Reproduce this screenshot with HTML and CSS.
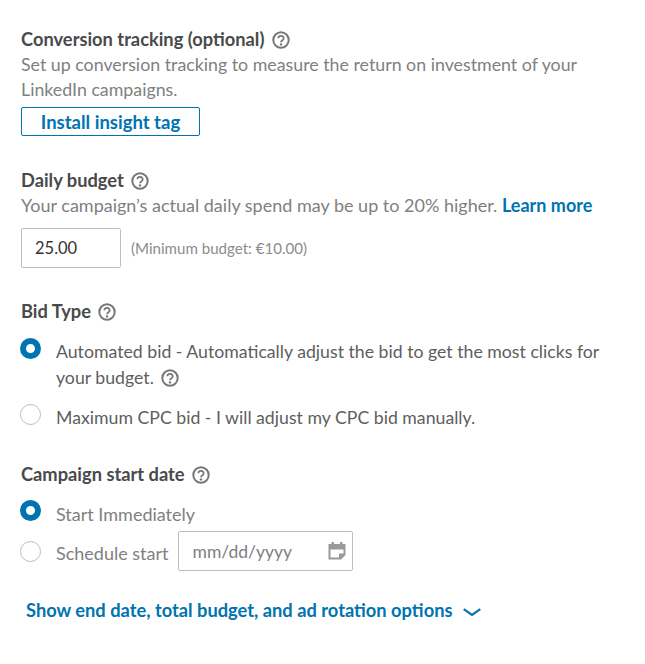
FILE: index.html
```html
<!DOCTYPE html>
<html lang="en">
<head>
    <meta charset="UTF-8">
    <meta name="viewport" content="width=device-width, initial-scale=1.0">
    <title>Campaign budget</title>
    <link rel="stylesheet" href="styles.css">
</head>
<body>
    <svg class="icon-defs" width="0" height="0">
        <symbol id="help" viewBox="0 0 18 18">
            <circle cx="9" cy="9" r="7.700" fill="none" stroke="currentColor" stroke-width="2"/>
            <path d="M6.300 7.200a2.700 2.400 0 1 1 4.200 2c-1 .6-1.500 1-1.500 2" fill="none" stroke="currentColor" stroke-width="1.800"/>
            <circle cx="9" cy="13.400" r="1.200" fill="currentColor"/>
        </symbol>
    </svg>

    <div class="form">
        <section class="field tracking">
            <h2 class="label">Conversion tracking (optional) <svg class="help"><use href="#help"/></svg></h2>
            <p class="hint">Set up conversion tracking to measure the return on investment of your LinkedIn campaigns.</p>
            <button class="btn-outline">Install insight tag</button>
        </section>

        <section class="field budget">
            <h2 class="label">Daily budget <svg class="help"><use href="#help"/></svg></h2>
            <p class="hint">Your campaign’s actual daily spend may be up to 20% higher. <a class="link" href="#">Learn more</a></p>
            <div class="budget-row">
                <input class="input budget-input" type="text" value="25.00">
                <span class="minimum">(Minimum budget: €10.00)</span>
            </div>
        </section>

        <section class="field bid">
            <h2 class="label">Bid Type <svg class="help"><use href="#help"/></svg></h2>
            <div class="radio-row bid-auto">
                <span class="radio checked"></span>
                <span class="radio-text">Automated bid - Automatically adjust the bid to get the most clicks for your budget. <svg class="help"><use href="#help"/></svg></span>
            </div>
            <div class="radio-row bid-max">
                <span class="radio"></span>
                <span class="radio-text">Maximum CPC bid - I will adjust my CPC bid manually.</span>
            </div>
        </section>

        <section class="field start">
            <h2 class="label">Campaign start date <svg class="help"><use href="#help"/></svg></h2>
            <div class="radio-row start-now">
                <span class="radio checked"></span>
                <span class="radio-text muted">Start Immediately</span>
            </div>
            <div class="radio-row start-later">
                <span class="radio"></span>
                <span class="radio-text muted">Schedule start</span>
                <div class="input date-input">
                    <span>mm/dd/yyyy</span>
                    <svg class="calendar" width="18" height="18" viewBox="0 0 18 18">
                        <path d="M.5 2h17v11l-4.500 4.500H.5z M2.500 7.500v8h8.500v-4h4.500v-4z" fill="currentColor" fill-rule="evenodd"/>
                        <rect x="3.500" y="0" width="2.500" height="4" fill="currentColor"/>
                        <rect x="12" y="0" width="2.500" height="4" fill="currentColor"/>
                    </svg>
                </div>
            </div>
        </section>

        <a class="link more" href="#">Show end date, total budget, and ad rotation options
            <svg class="chevron" width="18" height="9" viewBox="0 0 18 9"><path d="M.7 1.200L9 7l8.300-5.800" fill="none" stroke="currentColor" stroke-width="2.200"/></svg>
        </a>
    </div>
</body>
</html>
```

FILE: styles.css
```css
* {
    box-sizing: border-box;
}

body {
    margin: 0;
    background: #fff;
    font-family: "Lato", "Open Sans", sans-serif;
    font-size: 18px;
    line-height: 25px;
    color: rgba(0, 0, 0, 0.6);
}

.icon-defs {
    position: absolute;
}

.form {
    padding: 27px 40px 0 21px;
}

.field {
    margin: 0;
}

.label {
    margin: 0;
    font-size: 18.300px;
    font-weight: 700;
    color: #4a4a4a;
}

.help {
    width: 18px;
    height: 18px;
    margin-left: 3px;
    vertical-align: -3px;
    color: #777;
}

.hint {
    margin: 0;
    font-size: 17.800px;
    color: #80807f;
}

.budget .hint {
    font-size: 18px;
}

.link {
    color: #0073b1;
    font-size: 18px;
    font-weight: 700;
    text-decoration: none;
}

.btn-outline {
    display: block;
    width: 179px;
    height: 29px;
    margin-top: 5px;
    padding: 0;
    border: 1px solid #0073b1;
    border-radius: 2px;
    background: #fff;
    color: #0073b1;
    font: 700 18.500px "Lato", sans-serif;
}

.budget {
    margin-top: 32px;
}

.budget-row {
    display: flex;
    align-items: center;
    margin-top: 10px;
}

.input {
    border: 1px solid #bdbdbd;
    border-radius: 2px;
    background: #fff;
    font-family: "Lato", sans-serif;
    font-size: 17.500px;
}

.budget-input {
    width: 100px;
    height: 40px;
    padding: 0 13px;
    font-size: 16.500px;
    color: #333;
}

.minimum {
    margin-left: 10px;
    font-size: 15.100px;
    color: #8c8c8c;
}

.bid {
    margin-top: 31px;
}

.radio-row {
    display: flex;
    align-items: flex-start;
}

.radio {
    flex: none;
    width: 21px;
    height: 21px;
    margin-left: -1px;
    border: 1px solid #bdbdbd;
    border-radius: 50%;
    background: #fff;
}

.radio.checked {
    border: 6px solid #0073b1;
}

.radio-text {
    margin-left: 15px;
    padding-top: 1px;
    font-size: 17.700px;
    line-height: 26px;
    color: #5e5e5e;
}

.radio-text.muted {
    font-size: 18px;
    color: #80807f;
}

.bid-auto {
    margin-top: 14px;
}

.bid-max {
    margin-top: 13px;
}

.start {
    margin-top: 31px;
}

.start-now {
    margin-top: 13px;
}

.start-later {
    margin-top: 4px;
    align-items: center;
}

.start-later .radio-text {
    padding-top: 4px;
}

.date-input {
    display: flex;
    align-items: center;
    justify-content: space-between;
    width: 175px;
    height: 40px;
    margin-left: 9px;
    padding: 0 6px 0 14px;
    color: #80807f;
}

.calendar {
    color: #999;
}

.more {
    display: block;
    margin: 27px 0 0 5px;
    font-size: 18.300px;
}

.chevron {
    margin-left: 6px;
    vertical-align: 0;
}
```
